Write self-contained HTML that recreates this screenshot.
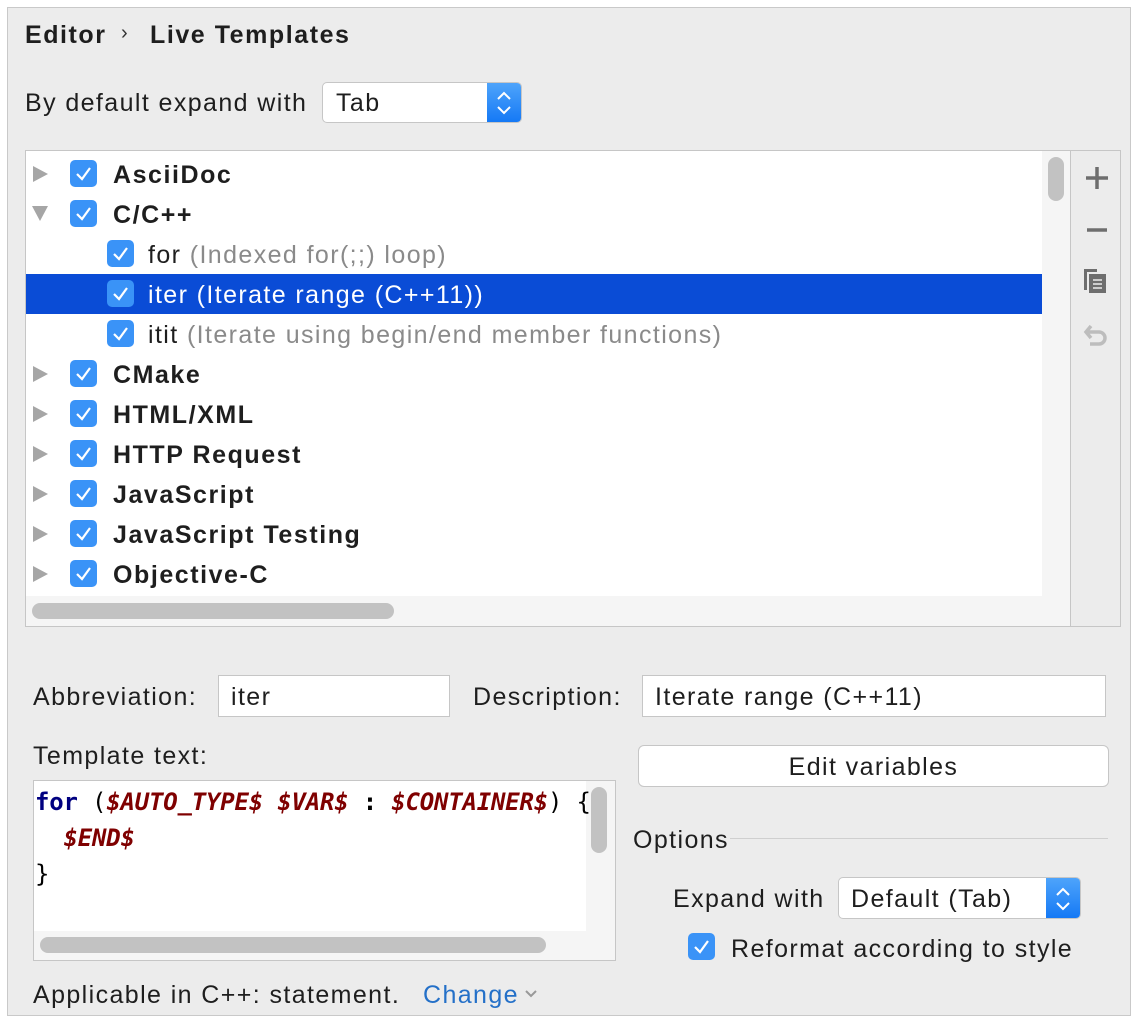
<!DOCTYPE html>
<html><head><meta charset="utf-8"><style>
*{margin:0;padding:0;box-sizing:border-box}
body{width:1140px;height:1022px;background:#fff;font-family:"Liberation Sans",sans-serif;color:#1e1e1e;position:relative;overflow:hidden}
.a{position:absolute}
.panel{left:7px;top:7px;width:1124px;height:1009px;background:#ececec;border:1px solid #c9c9c9}
.t{position:absolute;font-size:25px;letter-spacing:1.4px;line-height:28px;white-space:nowrap;margin-top:1px}
.b{font-weight:bold;letter-spacing:1.55px}
.cb{position:absolute;width:27px;height:27px;background:#3a93f7;border-radius:5px}
.cb svg{position:absolute;left:0;top:0}
.tri{position:absolute;width:0;height:0}
.field{position:absolute;background:#fff;border:1px solid #c6c6c6}
.combo{position:absolute;background:#fff;border:1px solid #c6c6c6;border-radius:5px;overflow:hidden}
.combo .bl{position:absolute;right:0;top:0;bottom:0;width:34px;background:linear-gradient(#4ea4fb,#1579f5)}
</style></head><body>
<div class="a panel"></div>
<div class="t b" style="left:25px;top:20px">Editor</div>
<div class="t" style="left:121px;top:18px;font-size:20px;color:#333">›</div>
<div class="t b" style="left:150px;top:20px">Live Templates</div>
<div class="t" style="left:25px;top:88px">By default expand with</div>
<div class="combo" style="left:322px;top:82px;width:200px;height:41px"><div class="t" style="left:13px;top:5px">Tab</div><div class="bl"><svg width="34" height="40"><path d="M11 16l6-6 6 6M11 24l6 6 6-6" stroke="#fff" stroke-width="2" fill="none"/></svg></div></div>

<div class="a" style="left:25px;top:150px;width:1096px;height:477px;background:#fff;border:1px solid #c6c6c6"></div>
<div class="a" style="left:1042px;top:151px;width:28px;height:445px;background:#f5f5f5"></div>
<div class="a" style="left:1048px;top:157px;width:16px;height:44px;background:#c2c2c2;border-radius:8px"></div>
<div class="a" style="left:26px;top:596px;width:1044px;height:30px;background:#f5f5f5"></div>
<div class="a" style="left:32px;top:603px;width:362px;height:16px;background:#c2c2c2;border-radius:8px"></div>
<div class="a" style="left:1070px;top:151px;width:50px;height:475px;background:#ececec;border-left:1px solid #c6c6c6"></div>
<svg class="a" style="left:1080px;top:160px" width="34" height="200">
<path d="M17 7v22M6 18h22" stroke="#6e6e6e" stroke-width="3.5"/>
<path d="M7 70h20" stroke="#6e6e6e" stroke-width="3.5"/>
<path d="M4 109h13v3H7v18H4z" fill="#6e6e6e"/><rect x="9" y="114" width="17" height="19" fill="#6e6e6e"/><path d="M13 120h9M13 124h9M13 128h9" stroke="#ececec" stroke-width="1.6"/>
<path d="M11 166l-5 6 5 6M6 172h13a6 6 0 0 1 0 12h-9" stroke="#bdbdbd" stroke-width="3.5" fill="none"/>
</svg>

<div class="a" style="left:26px;top:274px;width:1016px;height:40px;background:#0a4cd6"></div>

<div class="tri" style="left:33px;top:166px;border-left:15px solid #a6a6a6;border-top:8px solid transparent;border-bottom:8px solid transparent"></div>
<div class="tri" style="left:32px;top:206px;border-top:15px solid #a6a6a6;border-left:8px solid transparent;border-right:8px solid transparent"></div>
<div class="tri" style="left:33px;top:366px;border-left:15px solid #a6a6a6;border-top:8px solid transparent;border-bottom:8px solid transparent"></div>
<div class="tri" style="left:33px;top:406px;border-left:15px solid #a6a6a6;border-top:8px solid transparent;border-bottom:8px solid transparent"></div>
<div class="tri" style="left:33px;top:446px;border-left:15px solid #a6a6a6;border-top:8px solid transparent;border-bottom:8px solid transparent"></div>
<div class="tri" style="left:33px;top:486px;border-left:15px solid #a6a6a6;border-top:8px solid transparent;border-bottom:8px solid transparent"></div>
<div class="tri" style="left:33px;top:526px;border-left:15px solid #a6a6a6;border-top:8px solid transparent;border-bottom:8px solid transparent"></div>
<div class="tri" style="left:33px;top:566px;border-left:15px solid #a6a6a6;border-top:8px solid transparent;border-bottom:8px solid transparent"></div>

<div class="cb" style="left:70px;top:160px"><svg width="27" height="27"><path d="M7 14l5 5 8-11" stroke="#fff" stroke-width="2.2" fill="none"/></svg></div>
<div class="cb" style="left:70px;top:200px"><svg width="27" height="27"><path d="M7 14l5 5 8-11" stroke="#fff" stroke-width="2.2" fill="none"/></svg></div>
<div class="cb" style="left:107px;top:240px"><svg width="27" height="27"><path d="M7 14l5 5 8-11" stroke="#fff" stroke-width="2.2" fill="none"/></svg></div>
<div class="cb" style="left:107px;top:280px"><svg width="27" height="27"><path d="M7 14l5 5 8-11" stroke="#fff" stroke-width="2.2" fill="none"/></svg></div>
<div class="cb" style="left:107px;top:320px"><svg width="27" height="27"><path d="M7 14l5 5 8-11" stroke="#fff" stroke-width="2.2" fill="none"/></svg></div>
<div class="cb" style="left:70px;top:360px"><svg width="27" height="27"><path d="M7 14l5 5 8-11" stroke="#fff" stroke-width="2.2" fill="none"/></svg></div>
<div class="cb" style="left:70px;top:400px"><svg width="27" height="27"><path d="M7 14l5 5 8-11" stroke="#fff" stroke-width="2.2" fill="none"/></svg></div>
<div class="cb" style="left:70px;top:440px"><svg width="27" height="27"><path d="M7 14l5 5 8-11" stroke="#fff" stroke-width="2.2" fill="none"/></svg></div>
<div class="cb" style="left:70px;top:480px"><svg width="27" height="27"><path d="M7 14l5 5 8-11" stroke="#fff" stroke-width="2.2" fill="none"/></svg></div>
<div class="cb" style="left:70px;top:520px"><svg width="27" height="27"><path d="M7 14l5 5 8-11" stroke="#fff" stroke-width="2.2" fill="none"/></svg></div>
<div class="cb" style="left:70px;top:560px"><svg width="27" height="27"><path d="M7 14l5 5 8-11" stroke="#fff" stroke-width="2.2" fill="none"/></svg></div>

<div class="t b" style="left:113px;top:160px">AsciiDoc</div>
<div class="t b" style="left:113px;top:200px">C/C++</div>
<div class="t" style="left:148px;top:240px">for <span style="color:#8a8a8a">(Indexed for(;;) loop)</span></div>
<div class="t" style="left:148px;top:280px;color:#fff">iter (Iterate range (C++11))</div>
<div class="t" style="left:148px;top:320px">itit <span style="color:#8a8a8a">(Iterate using begin/end member functions)</span></div>
<div class="t b" style="left:113px;top:360px">CMake</div>
<div class="t b" style="left:113px;top:400px">HTML/XML</div>
<div class="t b" style="left:113px;top:440px">HTTP Request</div>
<div class="t b" style="left:113px;top:480px">JavaScript</div>
<div class="t b" style="left:113px;top:520px">JavaScript Testing</div>
<div class="t b" style="left:113px;top:560px">Objective-C</div>

<div class="t" style="left:33px;top:682px">Abbreviation:</div>
<div class="field" style="left:218px;top:675px;width:232px;height:42px"><div class="t" style="left:12px;top:6px">iter</div></div>
<div class="t" style="left:473px;top:682px">Description:</div>
<div class="field" style="left:642px;top:675px;width:464px;height:42px"><div class="t" style="left:12px;top:6px">Iterate range (C++11)</div></div>
<div class="t" style="left:33px;top:741px">Template text:</div>
<div class="a" style="left:638px;top:745px;width:471px;height:42px;background:#fff;border:1px solid #c6c6c6;border-radius:6px"><div class="t" style="left:0;right:0;top:6px;text-align:center">Edit variables</div></div>

<div class="a" style="left:33px;top:780px;width:583px;height:181px;background:#fff;border:1px solid #c6c6c6"></div>
<div class="a" style="left:34px;top:931px;width:552px;height:29px;background:#f5f5f5"></div>
<div class="a" style="left:586px;top:781px;width:29px;height:179px;background:#f5f5f5"></div>
<div class="a" style="left:591px;top:787px;width:16px;height:66px;background:#c2c2c2;border-radius:8px"></div>
<div class="a" style="left:40px;top:937px;width:506px;height:16px;background:#c2c2c2;border-radius:8px"></div>
<div class="a" style="left:35px;top:784px;font-family:'DejaVu Sans Mono','Liberation Mono',monospace;font-size:24px;line-height:36px;white-space:pre;font-weight:bold;color:#000;letter-spacing:-0.2px"><span style="color:#000080">for</span> <span style="font-weight:normal">(</span><i style="color:#7f0000">$AUTO_TYPE$</i> <i style="color:#7f0000">$VAR$</i> : <i style="color:#7f0000">$CONTAINER$</i><span style="font-weight:normal">) {</span>
  <i style="color:#7f0000">$END$</i>
<span style="font-weight:normal">}</span></div>

<div class="t" style="left:633px;top:825px">Options</div>
<div class="a" style="left:730px;top:838px;width:378px;height:1px;background:#cfcfcf"></div>
<div class="t" style="left:673px;top:884px">Expand with</div>
<div class="combo" style="left:838px;top:877px;width:243px;height:42px"><div class="t" style="left:12px;top:6px">Default (Tab)</div><div class="bl"><svg width="34" height="42"><path d="M11 17l6-6 6 6M11 25l6 6 6-6" stroke="#fff" stroke-width="2" fill="none"/></svg></div></div>
<div class="cb" style="left:688px;top:933px"><svg width="27" height="27"><path d="M7 14l5 5 8-11" stroke="#fff" stroke-width="2.2" fill="none"/></svg></div>
<div class="t" style="left:731px;top:934px">Reformat according to style</div>

<div class="t" style="left:33px;top:980px">Applicable in C++: statement.</div>
<div class="t" style="left:423px;top:980px;color:#2470c8">Change</div>
<svg class="a" style="left:523px;top:988px" width="16" height="12"><path d="M3 3l5 5 5-5" stroke="#999" stroke-width="2" fill="none"/></svg>
</body></html>
